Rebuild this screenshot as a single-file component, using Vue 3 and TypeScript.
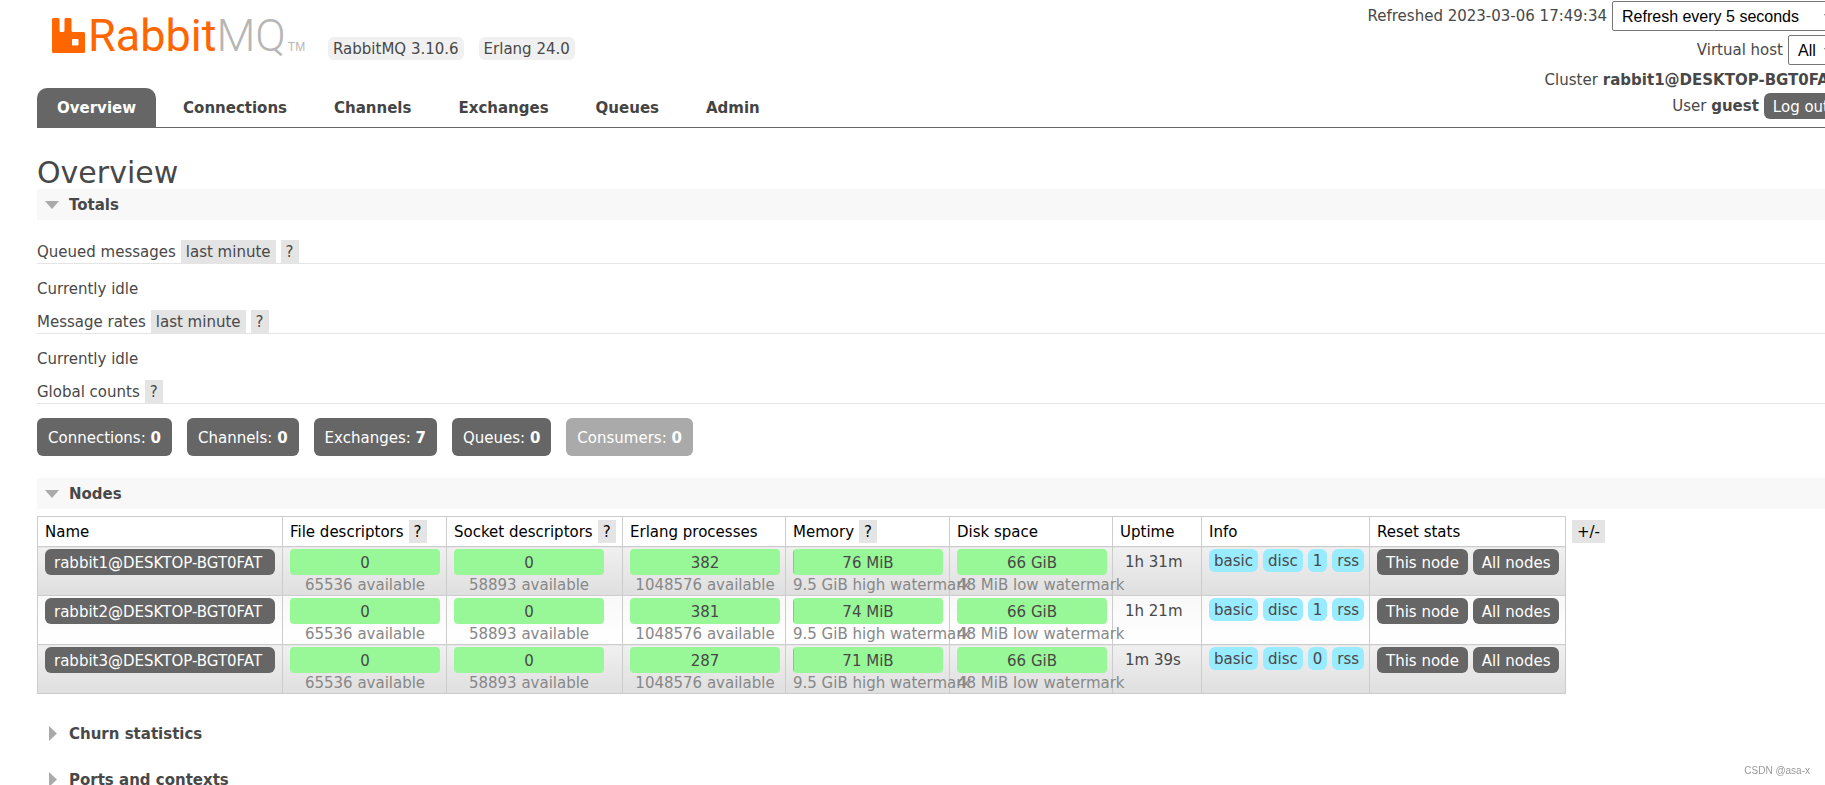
<script setup lang="ts">
import { ref } from 'vue'

interface Meter {
  value: string
  note: string
  edge?: boolean
}

interface ClusterNode {
  name: string
  meters: Meter[]
  uptime: string
  info: string[]
}

const tabs = ['Overview', 'Connections', 'Channels', 'Exchanges', 'Queues', 'Admin']
const active = ref('Overview')

const counts = [
  { label: 'Connections', value: 0 },
  { label: 'Channels', value: 0 },
  { label: 'Exchanges', value: 7 },
  { label: 'Queues', value: 0 },
  { label: 'Consumers', value: 0, disabled: true },
]

const columns = [
  { key: 'name', label: 'Name' },
  { key: 'files', label: 'File descriptors', help: true },
  { key: 'sockets', label: 'Socket descriptors', help: true },
  { key: 'processes', label: 'Erlang processes' },
  { key: 'memory', label: 'Memory', help: true },
  { key: 'disk', label: 'Disk space' },
  { key: 'uptime', label: 'Uptime' },
  { key: 'info', label: 'Info' },
  { key: 'reset', label: 'Reset stats' },
]

function makeNode(id: number, processes: string, memory: string, uptime: string, plugins: string): ClusterNode {
  return {
    name: `rabbit${id}@DESKTOP-BGT0FAT`,
    meters: [
      { value: '0', note: '65536 available' },
      { value: '0', note: '58893 available' },
      { value: processes, note: '1048576 available' },
      { value: memory, note: '9.5 GiB high watermark', edge: true },
      { value: '66 GiB', note: '48 MiB low watermark' },
    ],
    uptime,
    info: ['basic', 'disc', plugins, 'rss'],
  }
}

const nodes: ClusterNode[] = [
  makeNode(1, '382', '76 MiB', '1h 31m', '1'),
  makeNode(2, '381', '74 MiB', '1h 21m', '1'),
  makeNode(3, '287', '71 MiB', '1m 39s', '0'),
]
</script>

<template>
  <div class="page">
    <header class="header">
      <div class="left">
        <div class="brand">
          <a class="logo" href="#" aria-label="RabbitMQ">
            <svg class="mark" viewBox="0 0 33 35" width="33" height="35" aria-hidden="true">
              <path
                fill="#f60"
                fill-rule="evenodd"
                d="M1.500 0H6Q7.500 0 7.500 1.500V12.500Q7.500 14 9 14H11Q12.500 14 12.500 12.500V1.500Q12.500 0 14 0H18Q19.500 0 19.500 1.500V12.500Q19.500 14 21 14H31.500Q33 14 33 15.500V33.500Q33 35 31.500 35H1.500Q0 35 0 33.500V1.500Q0 0 1.500 0ZM21 21Q20 21 20 22V26.500Q20 27.500 21 27.500H25.500Q26.500 27.500 26.500 26.500V22Q26.500 21 25.500 21Z"
              />
            </svg>
            <span class="word">Rabbit<span class="mq">MQ</span></span>
            <span class="tm">TM</span>
          </a>
          <span class="version">RabbitMQ 3.10.6</span>
          <span class="version">Erlang 24.0</span>
        </div>
        <nav class="tabs">
          <a
            v-for="tab in tabs"
            :key="tab"
            href="#"
            class="tab"
            :class="{ active: tab === active }"
            @click.prevent="active = tab"
          >{{ tab }}</a>
        </nav>
      </div>
      <div class="status">
        <div class="line">
          <label for="refresh">Refreshed 2023-03-06 17:49:34</label>
          <select id="refresh" class="interval">
            <option>Refresh every 5 seconds</option>
          </select>
        </div>
        <div class="line">
          <label for="vhost">Virtual host</label>
          <select id="vhost">
            <option>All</option>
          </select>
        </div>
        <div class="line cluster">Cluster <b>rabbit1@DESKTOP-BGT0FAT</b></div>
        <div class="line">
          <span>User <b>guest</b></span>
          <button type="button" class="dark">Log out</button>
        </div>
      </div>
    </header>

    <main class="main">
      <h1>Overview</h1>

      <section>
        <h2 class="open">
          <svg class="arrow" viewBox="0 0 16 16" aria-hidden="true"><path d="M1 4H15L8 12Z" /></svg>
          Totals
        </h2>
        <h3>
          <span>Queued messages</span>
          <button type="button" class="chip">last minute</button>
          <button type="button" class="chip">?</button>
        </h3>
        <p>Currently idle</p>
        <h3>
          <span>Message rates</span>
          <button type="button" class="chip">last minute</button>
          <button type="button" class="chip">?</button>
        </h3>
        <p>Currently idle</p>
        <h3>
          <span>Global counts</span>
          <button type="button" class="chip">?</button>
        </h3>
        <div class="counts">
          <a
            v-for="count in counts"
            :key="count.label"
            :href="count.disabled ? undefined : '#'"
            class="count"
            :class="{ disabled: count.disabled }"
          >{{ count.label }}: <b>{{ count.value }}</b></a>
        </div>
      </section>

      <section>
        <h2 class="open">
          <svg class="arrow" viewBox="0 0 16 16" aria-hidden="true"><path d="M1 4H15L8 12Z" /></svg>
          Nodes
        </h2>
        <div class="nodes">
          <table>
            <colgroup>
              <col v-for="column in columns" :key="column.key" :class="column.key" />
            </colgroup>
            <thead>
              <tr>
                <th v-for="column in columns" :key="column.key" scope="col">
                  <div class="head">
                    <span>{{ column.label }}</span>
                    <button v-if="column.help" type="button" class="chip">?</button>
                  </div>
                </th>
              </tr>
            </thead>
            <tbody>
              <tr v-for="node in nodes" :key="node.name">
                <td><a href="#" class="dark">{{ node.name }}</a></td>
                <td v-for="(meter, i) in node.meters" :key="i">
                  <div class="meter">
                    <div class="bar" :class="{ edge: meter.edge }">{{ meter.value }}</div>
                    <div class="note">{{ meter.note }}</div>
                  </div>
                </td>
                <td><div class="uptime">{{ node.uptime }}</div></td>
                <td>
                  <div class="group">
                    <span v-for="(tag, i) in node.info" :key="i" class="tag">{{ tag }}</span>
                  </div>
                </td>
                <td>
                  <div class="group">
                    <button type="button" class="dark">This node</button>
                    <button type="button" class="dark">All nodes</button>
                  </div>
                </td>
              </tr>
            </tbody>
          </table>
          <button type="button" class="chip toggle">+/-</button>
        </div>
      </section>

      <h2 class="closed">
        <svg class="arrow" viewBox="0 0 16 16" aria-hidden="true"><path d="M5 0V15L13 7.500Z" /></svg>
        Churn statistics
      </h2>
      <h2 class="closed">
        <svg class="arrow" viewBox="0 0 16 16" aria-hidden="true"><path d="M5 0V15L13 7.500Z" /></svg>
        Ports and contexts
      </h2>
    </main>
    <div class="credit">CSDN @asa-x</div>
  </div>
</template>

<style>
html,
body {
  margin: 0;
  background: #fff;
}

html {
  overflow: hidden;
}
</style>

<style scoped>
.page {
  overflow: hidden;
  color: #484848;
  font: 15px/18px Verdana, "DejaVu Sans", sans-serif;
}

a {
  color: inherit;
  text-decoration: none;
}

button {
  border: 0;
  margin: 0;
  color: inherit;
  font: inherit;
  white-space: nowrap;
  cursor: pointer;
}

.header {
  display: flex;
  justify-content: space-between;
  margin-left: 37px;
  margin-right: -13px;
  border-bottom: 1px solid #666;
}

.left {
  display: flex;
  flex-direction: column;
  justify-content: space-between;
}

.brand {
  display: flex;
  align-items: flex-end;
  gap: 15px;
  padding: 17px 0 0 15px;
}

.logo {
  display: flex;
  align-items: flex-end;
  width: 261px;
  height: 36px;
  margin-bottom: 7px;
  color: #f60;
}

.mark {
  flex: none;
  margin-right: 3px;
}

.word {
  font: 45px/34px Roboto, "Liberation Sans", sans-serif;
}

.mq {
  color: #b6b6b6;
  font-weight: 300;
}

.tm {
  margin-left: 2px;
  color: #b6b6b6;
  font: 12px/12px "Liberation Sans", Arial, sans-serif;
}

.version {
  padding: 3px 5px 2px;
  border-radius: 6px;
  background: #f0f0f0;
}

.tabs {
  display: flex;
  gap: 7px;
}

.tab {
  padding: 11px 20px 10px;
  border-radius: 10px 10px 0 0;
  color: #444;
  font-weight: bold;
}

.tab.active {
  background: #666;
  color: #fff;
}

.status {
  display: flex;
  flex-direction: column;
  gap: 4px;
  padding: 1px 0 8px;
}

.line {
  display: flex;
  align-items: center;
  justify-content: flex-end;
  gap: 5px;
  white-space: nowrap;
}

.cluster {
  padding-top: 2px;
}

select {
  height: 30px;
  padding: 0 5px;
  border: 1px solid #767676;
  border-radius: 2px;
  background: #fff;
  color: #000;
  font: 16px "Liberation Sans", Arial, sans-serif;
}

.interval {
  min-width: 226px;
}

.dark {
  display: block;
  padding: 5px 9px 3px;
  border-radius: 6px;
  background: #666;
  color: #fff;
  white-space: nowrap;
}

.main {
  padding-left: 37px;
}

h1 {
  margin: 0;
  padding: 28px 0 0;
  font-size: 30px;
  font-weight: normal;
  line-height: 33px;
}

h2 {
  display: flex;
  align-items: center;
  gap: 9px;
  margin: 0;
  padding: 7px 0 6px 7px;
  font-size: 15px;
  line-height: 18px;
}

.open {
  background: #f8f8f8;
}

.closed {
  margin-bottom: 15px;
}

.arrow {
  width: 16px;
  height: 16px;
  fill: #aaa;
}

h3 {
  display: flex;
  align-items: center;
  gap: 5px;
  margin: 0;
  border-bottom: 1px solid #e4e4e4;
  font-size: 15px;
  font-weight: normal;
}

.open + h3 {
  margin-top: 20px;
}

.chip {
  padding: 3px 5px 2px;
  background: #e4e4e4;
}

p {
  margin: 0;
  padding: 16px 0 12px;
}

.counts {
  display: flex;
  gap: 15px;
  padding: 14px 0 22px;
}

.count {
  padding: 11px 11px 9px;
  border-radius: 6px;
  background: #666;
  color: #fff;
}

.count.disabled {
  background: #aaa;
}

.nodes {
  display: flex;
  align-items: flex-start;
  gap: 6px;
  padding: 7px 0 24px;
}

table {
  flex: none;
  width: 1529px;
  border-collapse: collapse;
  table-layout: fixed;
}

col.name {
  width: 245px;
}

col.files,
col.memory {
  width: 164px;
}

col.processes,
col.disk {
  width: 163px;
}

col.sockets {
  width: 176px;
}

col.uptime {
  width: 89px;
}

col.info {
  width: 168px;
}

th,
td {
  border: 1px solid #ccc;
  vertical-align: top;
  text-align: left;
}

th {
  padding: 3px 7px;
  color: #000;
  font-weight: normal;
}

td {
  padding: 2px 7px 1px;
}

tbody tr:nth-child(odd) td {
  background: linear-gradient(#f0f0f0, #dfdfdf);
}

tbody tr:nth-child(even) td {
  background: linear-gradient(#f8f8f8, #fff);
}

.head {
  display: flex;
  align-items: center;
  gap: 5px;
  height: 23px;
  white-space: nowrap;
}

.meter {
  width: 150px;
  text-align: center;
  white-space: nowrap;
}

.bar {
  padding: 5px 0 3px;
  border-radius: 4px;
  background: #98f898;
}

.bar.edge {
  background: linear-gradient(to right, #66dd66 1px, #98f898 1px);
}

.note {
  padding-top: 1px;
  color: #888;
}

.uptime {
  padding: 4px 5px;
}

.group {
  display: flex;
  gap: 5px;
}

.tag {
  padding: 3px 5px 2px;
  border-radius: 6px;
  background: #99ebff;
}

.toggle {
  margin-top: 4px;
  color: #000;
}

.credit {
  position: fixed;
  right: 15px;
  bottom: 7px;
  color: #999;
  font: 10px/14px "Liberation Sans", Arial, sans-serif;
}
</style>
